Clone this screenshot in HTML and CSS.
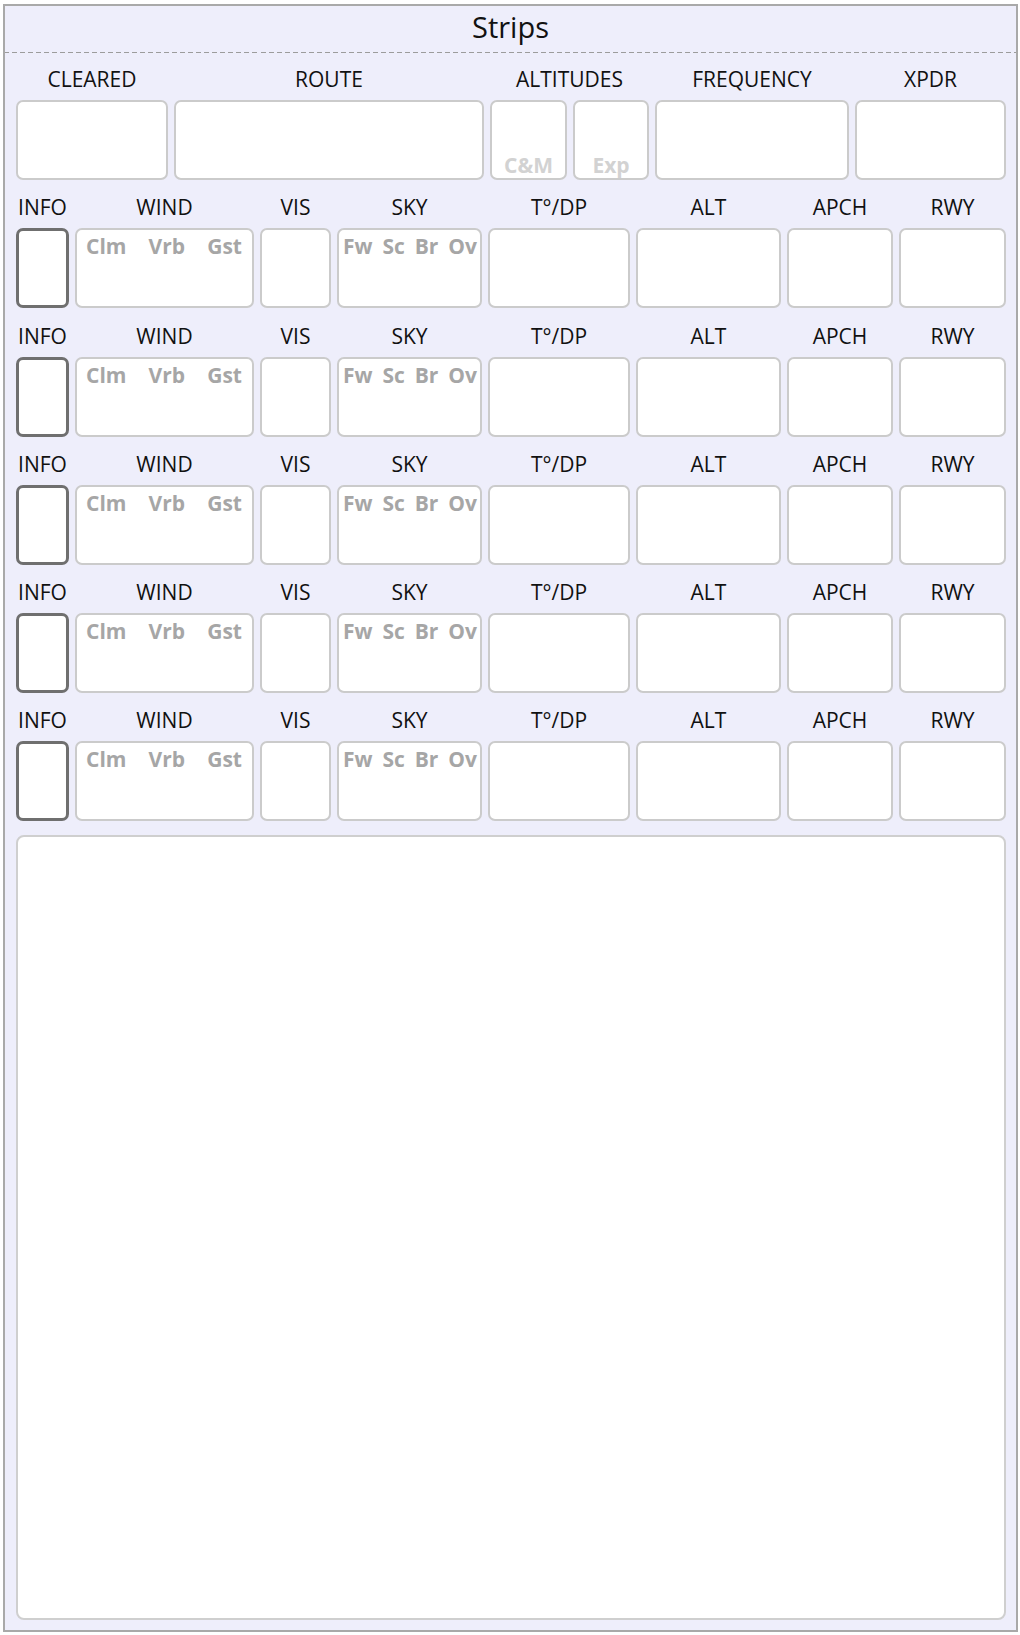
FILE: index.html
```html
<!DOCTYPE html>
<html lang="en">
<head>
    <meta charset="UTF-8">
    <meta name="viewport" content="width=device-width, initial-scale=1.0">
    <title>Strips</title>
    <link rel="stylesheet" href="styles.css">
</head>
<body>

    <div class="panel">
        <div class="panel-title">Strips</div>

        <div class="panel-body">
            <!-- Clearance strip -->
            <div class="strip strip-clearance">
                <span class="label">CLEARED</span>
                <span class="label">ROUTE</span>
                <span class="label span-2">ALTITUDES</span>
                <span class="label">FREQUENCY</span>
                <span class="label">XPDR</span>

                <div class="field"></div>
                <div class="field"></div>
                <div class="field field-bottom"><span class="hint-light">C&amp;M</span></div>
                <div class="field field-bottom"><span class="hint-light">Exp</span></div>
                <div class="field"></div>
                <div class="field"></div>
            </div>

            <!-- ATIS strips -->
            <div class="strip strip-atis">
                <span class="label">INFO</span>
                <span class="label">WIND</span>
                <span class="label">VIS</span>
                <span class="label">SKY</span>
                <span class="label">T°/DP</span>
                <span class="label">ALT</span>
                <span class="label">APCH</span>
                <span class="label">RWY</span>

                <div class="field field-info"></div>
                <div class="field field-hints wind"><span>Clm</span><span>Vrb</span><span>Gst</span></div>
                <div class="field"></div>
                <div class="field field-hints sky"><span>Fw</span><span>Sc</span><span>Br</span><span>Ov</span></div>
                <div class="field"></div>
                <div class="field"></div>
                <div class="field"></div>
                <div class="field"></div>
            </div>

            <div class="strip strip-atis">
                <span class="label">INFO</span>
                <span class="label">WIND</span>
                <span class="label">VIS</span>
                <span class="label">SKY</span>
                <span class="label">T°/DP</span>
                <span class="label">ALT</span>
                <span class="label">APCH</span>
                <span class="label">RWY</span>

                <div class="field field-info"></div>
                <div class="field field-hints wind"><span>Clm</span><span>Vrb</span><span>Gst</span></div>
                <div class="field"></div>
                <div class="field field-hints sky"><span>Fw</span><span>Sc</span><span>Br</span><span>Ov</span></div>
                <div class="field"></div>
                <div class="field"></div>
                <div class="field"></div>
                <div class="field"></div>
            </div>

            <div class="strip strip-atis">
                <span class="label">INFO</span>
                <span class="label">WIND</span>
                <span class="label">VIS</span>
                <span class="label">SKY</span>
                <span class="label">T°/DP</span>
                <span class="label">ALT</span>
                <span class="label">APCH</span>
                <span class="label">RWY</span>

                <div class="field field-info"></div>
                <div class="field field-hints wind"><span>Clm</span><span>Vrb</span><span>Gst</span></div>
                <div class="field"></div>
                <div class="field field-hints sky"><span>Fw</span><span>Sc</span><span>Br</span><span>Ov</span></div>
                <div class="field"></div>
                <div class="field"></div>
                <div class="field"></div>
                <div class="field"></div>
            </div>

            <div class="strip strip-atis">
                <span class="label">INFO</span>
                <span class="label">WIND</span>
                <span class="label">VIS</span>
                <span class="label">SKY</span>
                <span class="label">T°/DP</span>
                <span class="label">ALT</span>
                <span class="label">APCH</span>
                <span class="label">RWY</span>

                <div class="field field-info"></div>
                <div class="field field-hints wind"><span>Clm</span><span>Vrb</span><span>Gst</span></div>
                <div class="field"></div>
                <div class="field field-hints sky"><span>Fw</span><span>Sc</span><span>Br</span><span>Ov</span></div>
                <div class="field"></div>
                <div class="field"></div>
                <div class="field"></div>
                <div class="field"></div>
            </div>

            <div class="strip strip-atis">
                <span class="label">INFO</span>
                <span class="label">WIND</span>
                <span class="label">VIS</span>
                <span class="label">SKY</span>
                <span class="label">T°/DP</span>
                <span class="label">ALT</span>
                <span class="label">APCH</span>
                <span class="label">RWY</span>

                <div class="field field-info"></div>
                <div class="field field-hints wind"><span>Clm</span><span>Vrb</span><span>Gst</span></div>
                <div class="field"></div>
                <div class="field field-hints sky"><span>Fw</span><span>Sc</span><span>Br</span><span>Ov</span></div>
                <div class="field"></div>
                <div class="field"></div>
                <div class="field"></div>
                <div class="field"></div>
            </div>

            <!-- Notes area -->
            <div class="notes"></div>
        </div>
    </div>

</body>
</html>
```

FILE: styles.css
```css
body {
    font-family: 'Open Sans', 'Noto Sans', sans-serif;
    margin: 0;
    background: white;
    color: #111;
}
.panel {
    margin: 4px 2px 3px 3px;
    height: 1628px;
    box-sizing: border-box;
    border: 2px solid #a9a9a9;
    background: #eeeefb;
    display: flex;
    flex-direction: column;
}
.panel-title {
    font-size: 29px;
    line-height: 42px;
    padding-bottom: 4px;
    text-align: center;
}
.panel-body {
    flex: 1;
    display: flex;
    flex-direction: column;
    padding: 12px 10px 10px 11px;
    border-top: 1px solid transparent;
    border-image: repeating-linear-gradient(to right, #9c9c9c 0 5px, transparent 5px 8px) 1;
}

/* Strips */
.strip {
    display: grid;
    grid-template-rows: 28px 80px;
    column-gap: 6px;
    row-gap: 7px;
    margin-bottom: 13.3px;
}
.strip-clearance {
    grid-template-columns: 152px 310px 77px 76px 194px 151px;
}
.strip-atis {
    grid-template-columns: 53px 179px 71px 145px 142px 145px 106px 107px;
}
.label {
    font-size: 21px;
    line-height: 28px;
    text-align: center;
    white-space: nowrap;
}
.span-2 {
    grid-column: span 2;
}
.field {
    background: white;
    border: 2px solid #cbcbcb;
    border-radius: 7px;
}
.field-info {
    border: 3px solid #6f6f6f;
}
.field-hints {
    display: flex;
    justify-content: space-between;
    align-items: flex-start;
    padding-top: 4px;
    font-size: 21px;
    font-weight: 700;
    line-height: 24px;
    color: #a6a6a6;
}
.wind {
    padding-left: 9px;
    padding-right: 10px;
}
.sky {
    padding-left: 4px;
    padding-right: 3px;
}
.field-bottom {
    display: flex;
    justify-content: center;
    align-items: flex-end;
    padding-bottom: 1px;
}
.hint-light {
    font-size: 21px;
    font-weight: 700;
    line-height: 24px;
    color: #d2d2d2;
}

/* Notes */
.notes {
    flex: 1;
    background: white;
    border: 2px solid #cfcfcf;
    border-radius: 8px;
}
```
